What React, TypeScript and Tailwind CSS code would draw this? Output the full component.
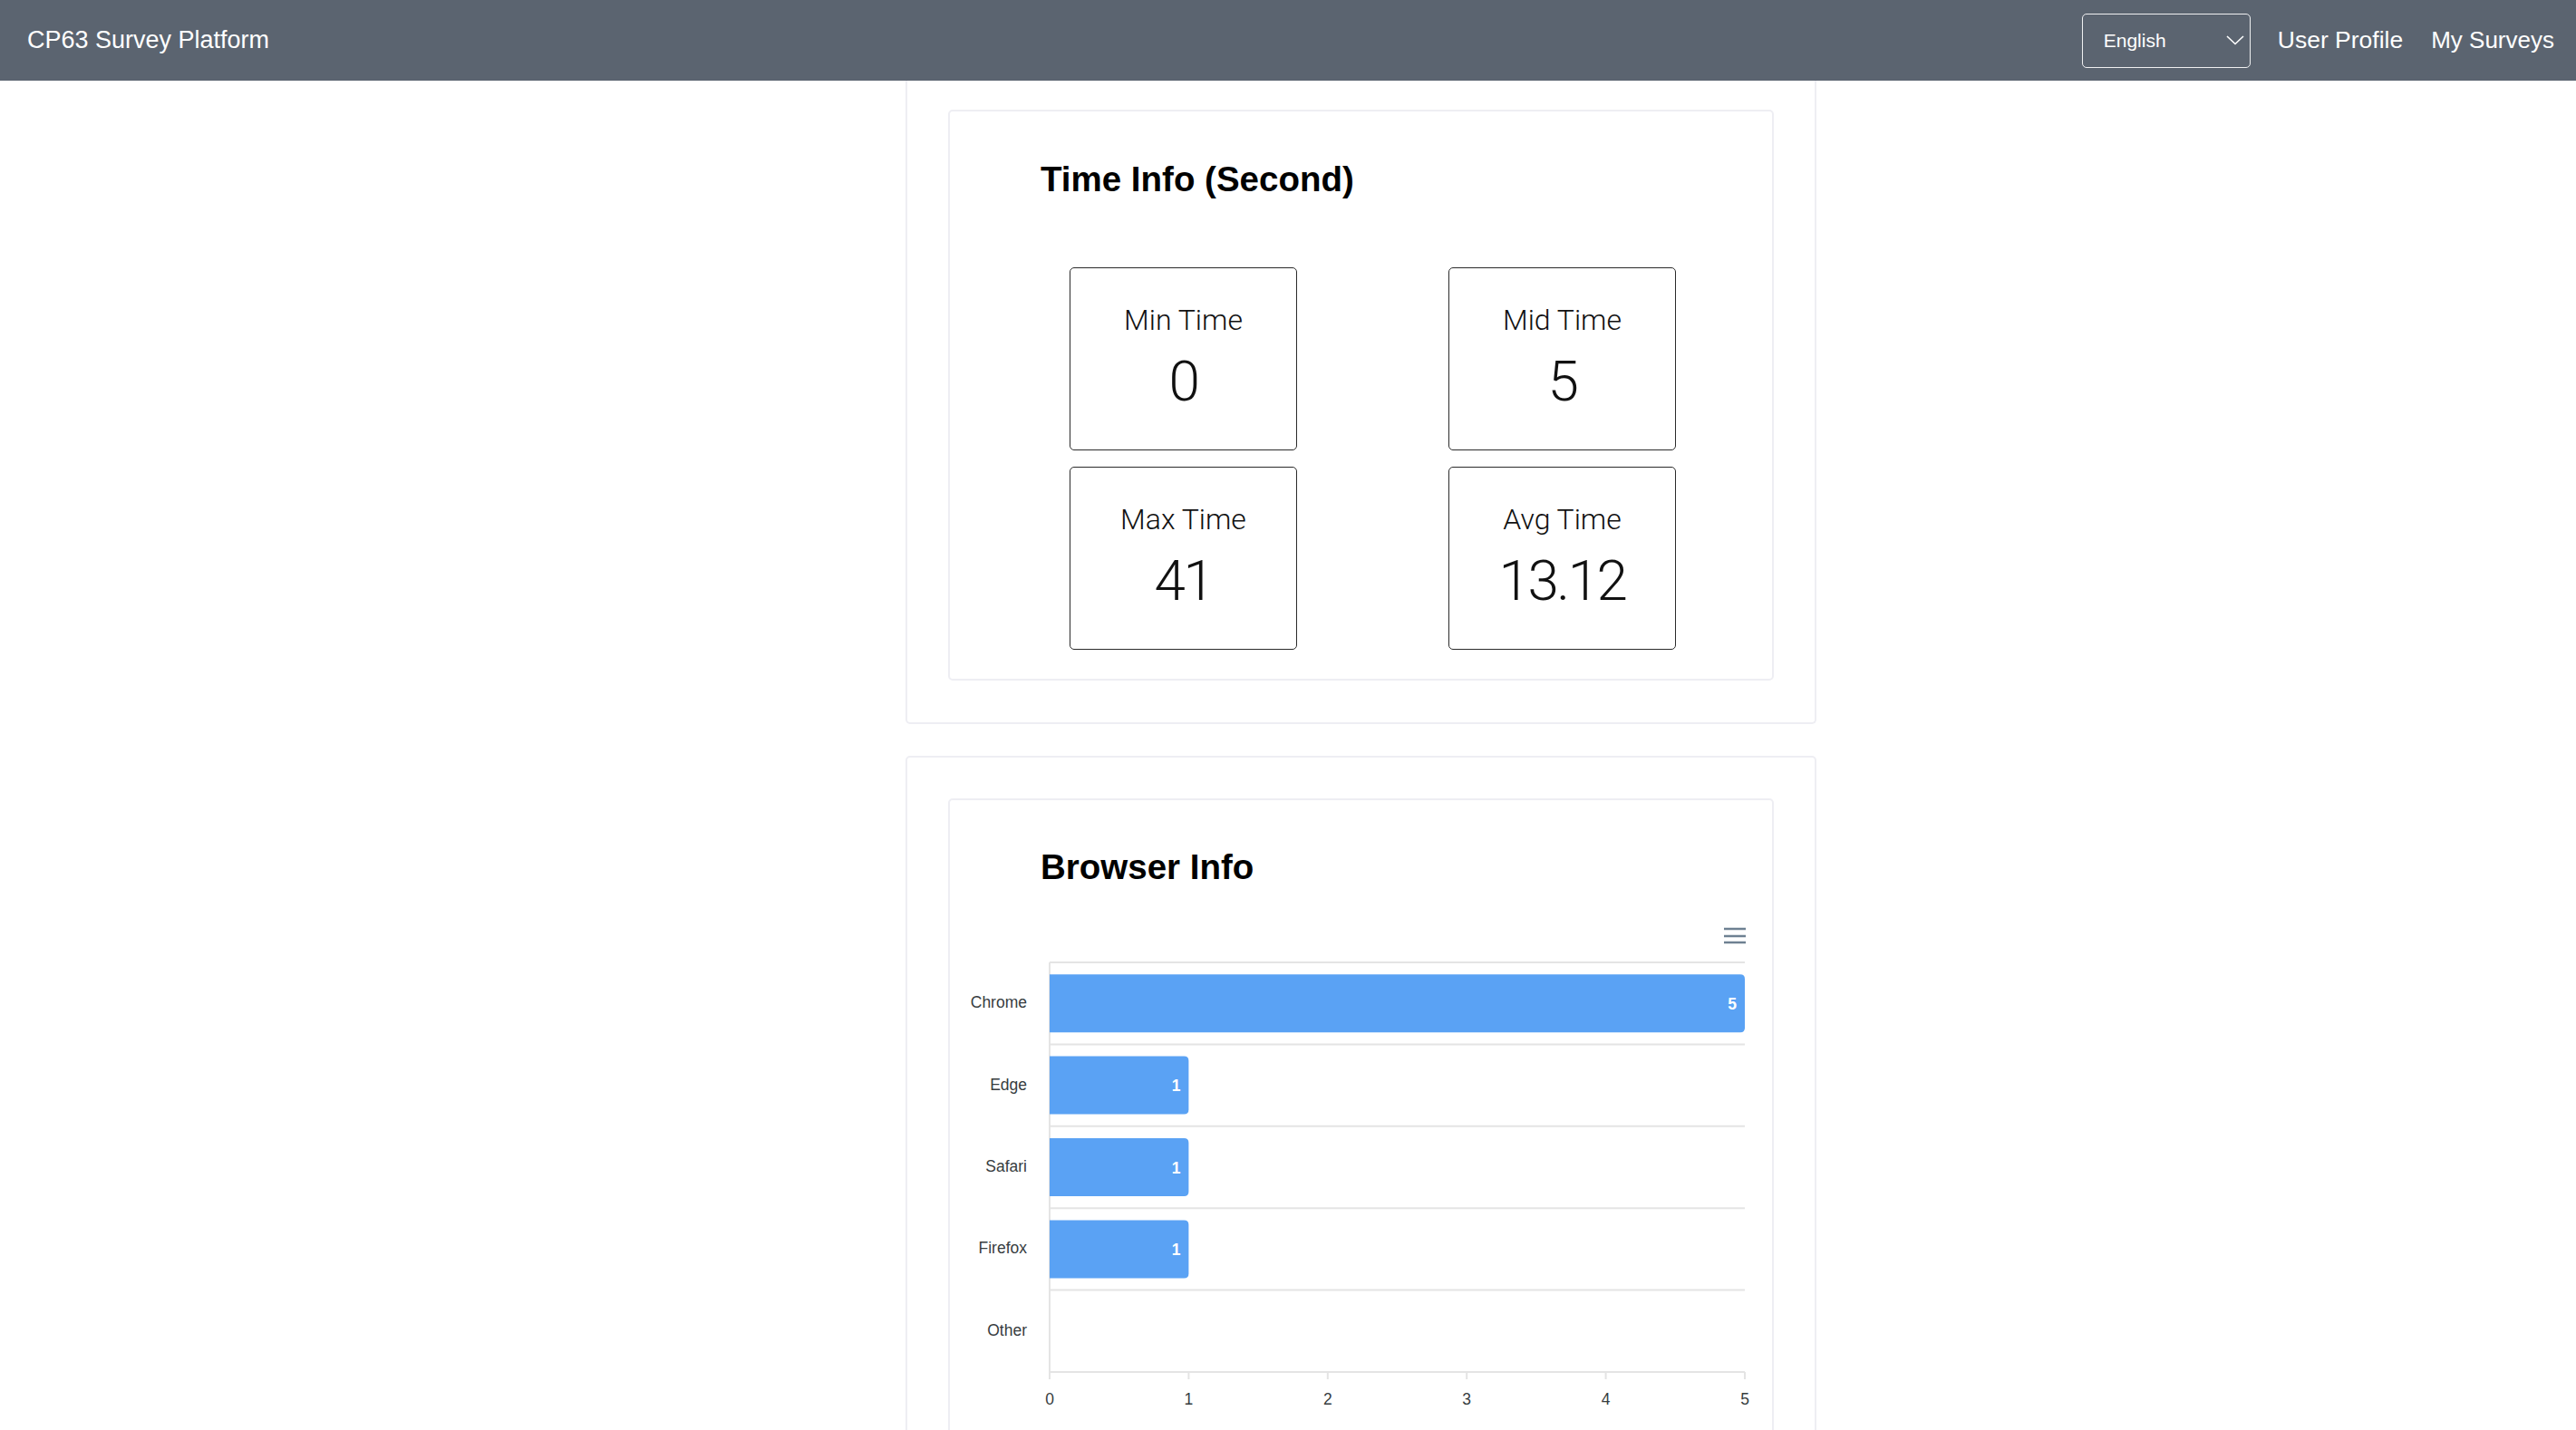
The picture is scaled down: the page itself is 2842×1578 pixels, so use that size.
const timeStats = [
  { label: "Min Time", value: "0" },
  { label: "Mid Time", value: "5" },
  { label: "Max Time", value: "41" },
  { label: "Avg Time", value: "13.12" },
]

const browsers = [
  { name: "Chrome", count: 5 },
  { name: "Edge", count: 1 },
  { name: "Safari", count: 1 },
  { name: "Firefox", count: 1 },
  { name: "Other", count: 0 },
]

const chartFont = "'Liberation Sans', Arial, sans-serif"

function BrowserChart() {
  const left = 98
  const right = 865
  const top = 51
  const bottom = 503
  const band = (bottom - top) / browsers.length
  const unit = (right - left) / 5
  const barH = 64
  const r = 5

  return (
    <svg width={880} height={570} className="block">
      {/* toolbar menu */}
      {[14, 22, 29].map((y) => (
        <line key={y} x1={842} x2={866} y1={y} y2={y} stroke="#6e8192" strokeWidth={2.5} />
      ))}

      {Array.from({ length: 6 }).map((_, k) => (
        <line
          key={k}
          x1={left}
          x2={right}
          y1={top + band * k}
          y2={top + band * k}
          stroke="#e4e4e4"
          strokeWidth={2}
        />
      ))}
      <line x1={left} x2={left} y1={top} y2={bottom} stroke="#e4e4e4" strokeWidth={2} />

      {browsers.map((b, i) => {
        const cy = top + band * (i + 0.5)
        const y0 = cy - barH / 2
        const y1 = cy + barH / 2
        const x1 = left + unit * b.count
        return (
          <g key={b.name}>
            <text x={73} y={cy + 5} textAnchor="end" fontFamily={chartFont} fontSize={17.5} fill="#373d3f">
              {b.name}
            </text>
            {b.count > 0 ? (
              <>
                <path
                  d={`M ${left} ${y0} H ${x1 - r} Q ${x1} ${y0} ${x1} ${y0 + r} V ${y1 - r} Q ${x1} ${y1} ${x1 - r} ${y1} H ${left} Z`}
                  fill="#5aa2f4"
                />
                <text
                  x={x1 - 9}
                  y={cy + 6.5}
                  textAnchor="end"
                  fontFamily={chartFont}
                  fontSize={17.5}
                  fontWeight={700}
                  fill="#ffffff"
                >
                  {b.count}
                </text>
              </>
            ) : null}
          </g>
        )
      })}

      {Array.from({ length: 6 }).map((_, k) => {
        const x = left + unit * k
        return (
          <g key={k}>
            <line x1={x} x2={x} y1={bottom} y2={bottom + 8} stroke="#e4e4e4" strokeWidth={2} />
            <text x={x} y={539} textAnchor="middle" fontFamily={chartFont} fontSize={17.5} fill="#373d3f">
              {k}
            </text>
          </g>
        )
      })}
    </svg>
  )
}

function StatBox({ label, value }: { label: string; value: string }) {
  return (
    <div className="flex h-[202px] flex-col items-center justify-center rounded-[5px] border border-[#2b2b2b] font-['Roboto',sans-serif] font-light text-[#111]">
      <div className="text-[32px] leading-[38px]">{label}</div>
      <div className="mt-[12px] text-[62px] leading-[74px] tracking-[-0.04em]">{value}</div>
    </div>
  )
}

export default function App() {
  return (
    <div className="h-screen overflow-hidden bg-white font-['Liberation_Sans',Arial,sans-serif]">
      <header className="flex h-[89px] items-center justify-between bg-[#5b6470] pl-[30px] pr-[24px] text-white">
        <div className="text-[27px]">CP63 Survey Platform</div>
        <nav className="flex items-center">
          <div className="flex h-[60px] w-[186px] items-center justify-between rounded-[5px] border border-white/90 pl-[23px] pr-[6px] text-[21px]">
            <span>English</span>
            <svg width="20" height="11" viewBox="0 0 20 11" className="block">
              <polyline points="1,1 10,9.5 19,1" fill="none" stroke="#ffffff" strokeWidth={1.6} />
            </svg>
          </div>
          <a className="ml-[30px] text-[26.5px]">User Profile</a>
          <a className="ml-[31px] text-[26px]">My Surveys</a>
        </nav>
      </header>

      <main className="ml-[999px] w-[1005px]">
        <section className="rounded-b-[5px] border-2 border-t-0 border-[#eeeef3] px-[45px] pb-[46px] pt-[32px]">
          <div className="rounded-[5px] border-2 border-[#eeeef3] pb-[32px] pl-[100px] pt-[52px]">
            <h2 className="text-[38.5px] font-bold leading-[1.2] text-black">Time Info (Second)</h2>
            <div className="ml-[32px] mt-[74px] grid w-max grid-cols-[251px_251px] gap-x-[167px] gap-y-[18px]">
              {timeStats.map((s) => (
                <StatBox key={s.label} label={s.label} value={s.value} />
              ))}
            </div>
          </div>
        </section>

        <section className="mt-[35px] rounded-[5px] border-2 border-[#eeeef3] px-[45px] pt-[45px]">
          <div className="rounded-[5px] border-2 border-[#eeeef3] pt-[51px]">
            <h2 className="pl-[100px] text-[38.5px] font-bold leading-[1.2] text-black">Browser Info</h2>
            <div className="ml-[12px] mt-[31px]">
              <BrowserChart />
            </div>
          </div>
        </section>
      </main>
    </div>
  )
}
